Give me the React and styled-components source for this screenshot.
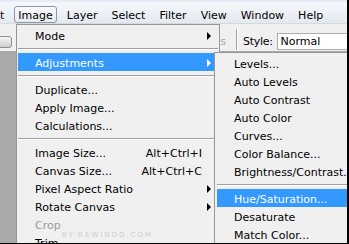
import styled, { createGlobalStyle } from "styled-components";

const GlobalStyle = createGlobalStyle`
  html, body {
    margin: 0;
    padding: 0;
    overflow: hidden;
  }
  body {
    font-family: "DejaVu Sans", "Liberation Sans", sans-serif;
    font-size: 11px;
    color: #000;
  }
`;

const Frame = styled.div`
  position: relative;
  width: 349px;
  height: 244px;
  box-sizing: border-box;
  border-right: 2px solid #000;
  border-bottom: 1px solid #000;
  overflow: hidden;
  display: flex;
  flex-direction: column;
  background: #a9a9a9;
`;

const MenuBar = styled.div`
  display: flex;
  align-items: flex-end;
  height: 24px;
  box-sizing: border-box;
  border-top: 2px solid #e4ebf4;
  border-bottom: 1px solid #d3d9e1;
  background: linear-gradient(#f6f8fb, #e4e9f0);
  white-space: nowrap;
`;

const BarItem = styled.div`
  flex-shrink: 0;
  margin: 0 3px;
  padding: 2px 3px 0;
  border: 1px solid ${(p) => (p.$open ? "#8a97a8" : "transparent")};
  border-radius: 3px;
  background: ${(p) => (p.$open ? "linear-gradient(#f9fafc, #e6ebf1)" : "none")};
  line-height: 13px;

  &:first-child {
    margin-left: -21px;
  }
`;

const Toolbar = styled.div`
  display: flex;
  align-items: center;
  height: 27px;
  box-sizing: border-box;
  padding-top: 8px;
  background: #f0f0f0;
  white-space: nowrap;
`;

const ToolButton = styled.div`
  flex-shrink: 0;
  width: 14px;
  height: 12px;
  box-sizing: border-box;
  margin-left: -2px;
  border: 1px solid #8e8f8f;
  border-radius: 3px;
  background: linear-gradient(#f6f6f6, #cfcfcf);
`;

const GhostArea = styled.div`
  flex-shrink: 0;
  width: 214px;
  text-align: right;
  color: #a8a8a8;
`;

const Divider = styled.div`
  flex-shrink: 0;
  align-self: flex-end;
  width: 1px;
  height: 21px;
  margin-left: 10px;
  margin-bottom: 1px;
  background: #a0a0a0;
  border-right: 1px solid #fff;
`;

const FieldLabel = styled.span`
  flex-shrink: 0;
  margin-left: 5px;
  letter-spacing: -0.3px;
`;

const Field = styled.div`
  flex-shrink: 0;
  width: 90px;
  height: 17px;
  box-sizing: border-box;
  margin-left: 4px;
  padding-left: 3px;
  border: 1px solid #abadb3;
  border-right: none;
  background: #fff;
  line-height: 15px;
`;

const Workspace = styled.div`
  flex: 1;
  background: #a9a9a9;
`;

const Menu = styled.div`
  position: absolute;
  left: ${(p) => p.$left}px;
  top: ${(p) => p.$top}px;
  width: ${(p) => p.$width}px;
  box-sizing: border-box;
  padding: 1px 0 0;
  border: 1px solid #979797;
  background: #f0f0f0;
  white-space: nowrap;
`;

const Item = styled.div`
  display: grid;
  grid-template-columns: 1fr auto 16px;
  align-items: center;
  height: 18px;
  box-sizing: border-box;
  margin: 0 ${(p) => p.$inset}px;
  padding: 4px 0 0 17px;
  line-height: 14px;
  background: ${(p) => (p.$active ? "#3399ff" : "transparent")};
  color: ${(p) => (p.$active ? "#fff" : p.$disabled ? "#9a9a9a" : "#000")};
`;

const Shortcut = styled.span`
  text-align: right;
`;

const Arrow = styled.span`
  width: 0;
  height: 0;
  margin: -3px 0 0 5px;
  border-top: 4px solid transparent;
  border-bottom: 4px solid transparent;
  border-left: 4px solid ${(p) => (p.$light ? "#fff" : "#000")};
`;

const Separator = styled.div`
  height: 9px;
  margin: 0 ${(p) => p.$inset}px;
  box-sizing: border-box;
  padding-top: 4px;

  &::before {
    content: "";
    display: block;
    height: 1px;
    background: #a0a0a0;
    border-bottom: 1px solid #fff;
  }
`;

const Watermark = styled.div`
  position: absolute;
  left: 62px;
  top: 231px;
  font-size: 7px;
  letter-spacing: 2px;
  color: #cdcdcd;
`;

const barItems = ["Edit", "Image", "Layer", "Select", "Filter", "View", "Window", "Help"];

const imageMenu = [
  { label: "Mode", sub: true },
  { sep: true },
  { label: "Adjustments", sub: true, active: true },
  { sep: true },
  { label: "Duplicate..." },
  { label: "Apply Image..." },
  { label: "Calculations..." },
  { sep: true },
  { label: "Image Size...", key: "Alt+Ctrl+I" },
  { label: "Canvas Size...", key: "Alt+Ctrl+C" },
  { label: "Pixel Aspect Ratio", sub: true },
  { label: "Rotate Canvas", sub: true },
  { label: "Crop", disabled: true },
  { label: "Trim..." },
];

const adjustMenu = [
  { label: "Levels..." },
  { label: "Auto Levels" },
  { label: "Auto Contrast" },
  { label: "Auto Color" },
  { label: "Curves..." },
  { label: "Color Balance..." },
  { label: "Brightness/Contrast..." },
  { sep: true },
  { label: "Hue/Saturation...", active: true },
  { label: "Desaturate" },
  { label: "Match Color..." },
  { label: "Replace Color..." },
];

const MenuList = ({ items, inset }) =>
  items.map((it, i) =>
    it.sep ? (
      <Separator key={i} $inset={inset} />
    ) : (
      <Item key={i} $inset={inset} $active={it.active} $disabled={it.disabled}>
        <span>{it.label}</span>
        <Shortcut>{it.key}</Shortcut>
        {it.sub ? <Arrow $light={it.active} /> : <span />}
      </Item>
    )
  );

export default function App() {
  return (
    <>
      <GlobalStyle />
      <Frame>
        <MenuBar>
          {barItems.map((name) => (
            <BarItem key={name} $open={name === "Image"}>
              {name}
            </BarItem>
          ))}
        </MenuBar>
        <Toolbar>
          <ToolButton />
          <GhostArea>Refine Edges</GhostArea>
          <Divider />
          <FieldLabel>Style:</FieldLabel>
          <Field>Normal</Field>
        </Toolbar>
        <Workspace />

        <Menu $left={16} $top={24} $width={204}>
          <MenuList items={imageMenu} inset={1} />
        </Menu>
        <Menu $left={214} $top={52} $width={170}>
          <MenuList items={adjustMenu} inset={2} />
        </Menu>
        <Watermark>BY:REWINDD.COM</Watermark>
      </Frame>
    </>
  );
}
